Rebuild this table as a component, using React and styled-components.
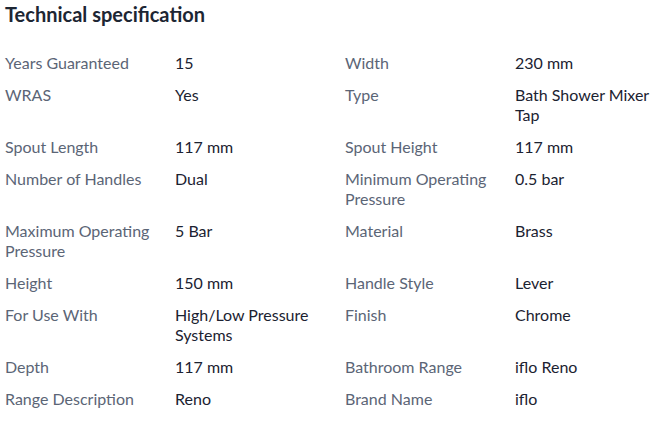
import React from "react";
import styled, { createGlobalStyle } from "styled-components";

const Global = createGlobalStyle`
  html, body { margin: 0; padding: 0; background: #fff; }
  body { font-family: Lato, "Open Sans", sans-serif; }
`;

const Wrap = styled.section`
  padding: 0 5px;
`;

const Title = styled.h2`
  margin: 0;
  font-size: 20px;
  line-height: 28px;
  font-weight: 700;
  color: #1d2633;
`;

const Grid = styled.dl`
  margin: 19px 0 0;
  display: grid;
  grid-template-columns: repeat(4, 170px);
`;

const Cell = styled.div`
  padding: 6px 15px 6px 0;
  font-size: 16px;
  line-height: 20px;
`;

const Label = styled(Cell).attrs({ as: "dt" })`
  color: #5b6576;
`;

const Value = styled(Cell).attrs({ as: "dd" })`
  margin: 0;
  color: #1b2231;
`;

const specs = [
  ["Years Guaranteed", "15"],
  ["Width", "230 mm"],
  ["WRAS", "Yes"],
  ["Type", "Bath Shower Mixer Tap"],
  ["Spout Length", "117 mm"],
  ["Spout Height", "117 mm"],
  ["Number of Handles", "Dual"],
  ["Minimum Operating Pressure", "0.5 bar"],
  ["Maximum Operating Pressure", "5 Bar"],
  ["Material", "Brass"],
  ["Height", "150 mm"],
  ["Handle Style", "Lever"],
  ["For Use With", "High/Low Pressure Systems"],
  ["Finish", "Chrome"],
  ["Depth", "117 mm"],
  ["Bathroom Range", "iflo Reno"],
  ["Range Description", "Reno"],
  ["Brand Name", "iflo"],
];

export default function App() {
  return (
    <Wrap>
      <Global />
      <Title>Technical specification</Title>
      <Grid>
        {specs.map(([k, v]) => (
          <React.Fragment key={k}>
            <Label>{k}</Label>
            <Value>{v}</Value>
          </React.Fragment>
        ))}
      </Grid>
    </Wrap>
  );
}
